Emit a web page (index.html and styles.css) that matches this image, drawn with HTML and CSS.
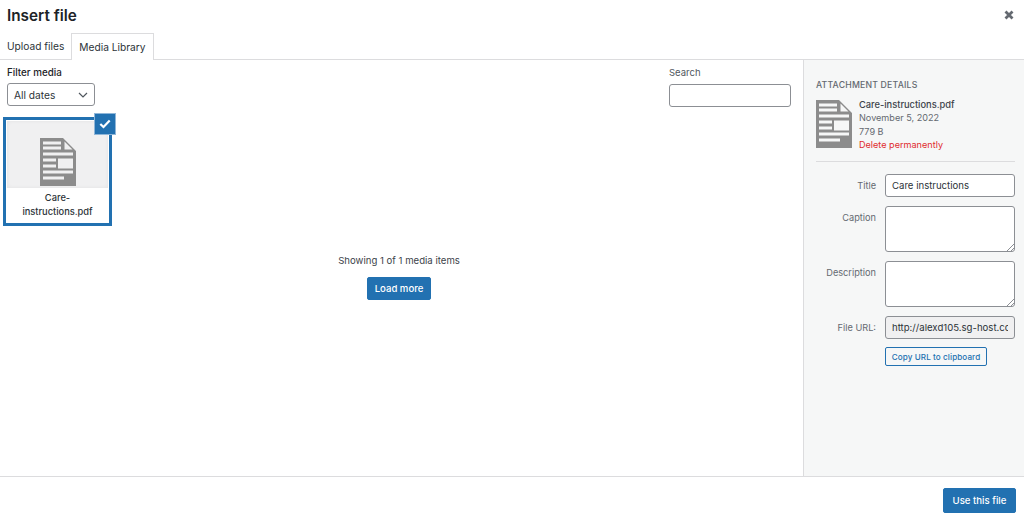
FILE: index.html
```html
<!DOCTYPE html>
<html lang="en">
<head>
<meta charset="utf-8">
<title>Insert file</title>
<link rel="stylesheet" href="styles.css">
</head>
<body>
<svg class="defs" width="0" height="0" aria-hidden="true">
  <symbol id="doc" viewBox="0 0 36 48">
    <path fill="#8c8c8c" fill-rule="evenodd" d="M0 0H23L36 13V48H0Z M3 3.500V6.500H21V3.500Z M3 8.500V11.500H21V8.500Z M24.500 3.500V11.500H32.500Z M3 14.500V17.500H33V14.500Z M3 20.500V23.500H16V20.500Z M18 20.500V30.500H33V20.500Z M3 26.500V29.500H16V26.500Z M3 32.500V35.500H33V32.500Z M3 38.500V41.500H24V38.500Z"/>
  </symbol>
</svg>
<div class="modal">
  <header class="head">
    <h1 class="title">Insert file</h1>
    <button class="close" aria-label="Close">
      <svg width="10" height="10" viewBox="0 0 10 10"><path d="M1.500 1.500L8.500 8.500M8.500 1.500L1.500 8.500" stroke="#646970" stroke-width="2.800"/></svg>
    </button>
    <nav class="tabs">
      <a class="tab">Upload files</a>
      <a class="tab active">Media Library</a>
    </nav>
  </header>
  <div class="main">
    <section class="browser">
      <div class="toolbar">
        <div class="filter">
          <label class="filter-label">Filter media</label>
          <div class="select">All dates
            <svg width="10" height="6" viewBox="0 0 10 6"><path d="M1 1L5 5L9 1" fill="none" stroke="#50575e" stroke-width="1.200"/></svg>
          </div>
        </div>
        <div class="search">
          <label class="search-label">Search</label>
          <div class="search-input"></div>
        </div>
      </div>
      <div class="grid">
        <div class="thumb">
          <div class="preview"><svg class="thumb-icon"><use href="#doc"/></svg></div>
          <div class="filename">Care-<br>instructions.pdf</div>
          <span class="check">
            <svg width="12" height="10" viewBox="0 0 12 10"><path d="M1.300 5L4.500 8L10.700 1.500" fill="none" stroke="#fff" stroke-width="2.200"/></svg>
          </span>
        </div>
      </div>
      <div class="loader">
        <p class="count">Showing 1 of 1 media items</p>
        <button class="btn more">Load more</button>
      </div>
    </section>
    <aside class="side">
      <h2 class="side-title">ATTACHMENT DETAILS</h2>
      <div class="info">
        <svg class="info-icon"><use href="#doc"/></svg>
        <div class="meta">
          <div class="meta-name">Care-instructions.pdf</div>
          <div>November 5, 2022</div>
          <div>779 B</div>
          <div class="delete">Delete permanently</div>
        </div>
      </div>
      <div class="fields">
        <div class="row"><label class="lab">Title</label><div class="input">Care instructions</div></div>
        <div class="row"><label class="lab">Caption</label><div class="area"><svg class="grip" width="8" height="8" viewBox="0 0 8 8"><path d="M1 8L8 1M5 8L8 5" stroke="#8c8f94"/></svg></div></div>
        <div class="row"><label class="lab">Description</label><div class="area"><svg class="grip" width="8" height="8" viewBox="0 0 8 8"><path d="M1 8L8 1M5 8L8 5" stroke="#8c8f94"/></svg></div></div>
        <div class="row"><label class="lab">File URL:</label><div class="input url"><span class="url-text">http://alexd105.sg-host.com/wp-content/uploads</span></div></div>
        <div class="row copy-row"><button class="copy">Copy URL to clipboard</button></div>
      </div>
    </aside>
  </div>
  <footer class="foot"><button class="btn use">Use this file</button></footer>
</div>
</body>
</html>
```
FILE: styles.css
```css
* { box-sizing: border-box; }
html, body { margin: 0; height: 100%; }
body { font-family: Inter, "Liberation Sans", sans-serif; font-size: 10px; color: #3c434a; background: #fff; overflow: hidden; }
.defs { position: absolute; }
.modal { display: flex; flex-direction: column; width: 1024px; height: 520px; }
.head { position: relative; height: 60px; border-bottom: 1px solid #dcdcde; padding-left: 7px; }
.title { margin: 0; height: 33px; font-size: 15.300px; font-weight: 600; line-height: 31px; color: #1d2327; }
.close { position: absolute; top: 10px; right: 10px; width: 10px; height: 10px; padding: 0; border: 0; background: none; display: flex; }
.tabs { display: flex; }
.tab { height: 27px; padding: 0 7px 0 0; font-size: 10.200px; line-height: 26px; color: #2c3338; }
.tab.active { background: #fff; border: 1px solid #dcdcde; border-bottom: 0; padding: 0 7px; line-height: 26px; }
.main { flex: 1; display: flex; min-height: 0; }
.browser { position: relative; flex: 1; padding: 7px 12px 0 7px; }
.toolbar { display: flex; justify-content: space-between; height: 50px; }
.filter-label { display: block; font-size: 9.800px; font-weight: 500; line-height: 12px; color: #1d2327; margin-bottom: 4px; }
.select { display: flex; justify-content: space-between; align-items: center; width: 88px; height: 23px; padding: 0 6px 0 6px; border: 1px solid #8c8f94; border-radius: 3px; font-size: 10.200px; color: #2c3338; background: #fff; }
.search { width: 122px; }
.search-label { display: block; font-size: 9.500px; line-height: 12px; color: #50575e; margin-bottom: 5px; }
.search-input { height: 23px; border: 1px solid #8c8f94; border-radius: 3px; background: #fff; }
.grid { margin-left: -4px; }
.thumb { position: relative; width: 109px; height: 109px; border: 3px solid #2271b1; padding: 1px; background: #fff; }
.preview { height: 67px; background: #f0f0f1; display: flex; justify-content: center; padding-top: 17px; box-shadow: inset 0 0 4px rgba(0,0,0,.06); }
.thumb-icon { width: 36px; height: 48px; }
.filename { height: 34px; padding-top: 3px; text-align: center; font-size: 9.300px; font-weight: 500; line-height: 13.500px; color: #2c3338; background: #fff; }
.check { position: absolute; top: -7px; right: -7px; width: 22px; height: 22px; display: flex; align-items: center; justify-content: center; background: #2271b1; border: 1.500px solid #8fb6d8; }
.loader { position: absolute; top: 194px; left: 0; right: 5px; text-align: center; }
.count { margin: 0 0 10px; font-size: 9.600px; line-height: 13px; color: #3c434a; }
.btn { height: 23px; padding: 0; border: 1px solid #2271b1; border-radius: 2px; background: #2271b1; color: #fff; font: 500 9.600px Inter, "Liberation Sans", sans-serif; }
.more { width: 64px; }
.side { width: 221px; border-left: 1px solid #dcdcde; background: #f6f7f7; padding: 19px 9px 0 12px; }
.side-title { margin: 0 0 7px; font-size: 8.700px; font-weight: 500; line-height: 12px; color: #646970; letter-spacing: .2px; }
.info { display: flex; gap: 7px; padding-bottom: 10px; border-bottom: 1px solid #dcdcde; }
.info-icon { width: 36px; height: 48px; flex: none; margin-top: 2px; }
.meta { font-size: 9.100px; line-height: 13.300px; color: #646970; }
.meta-name { font-weight: 500; font-size: 9.300px; color: #3c434a; }
.delete { color: #e02b2e; }
.fields { display: flex; flex-direction: column; padding-top: 12px; gap: 9px; }
.row { display: flex; gap: 9px; }
.lab { width: 60px; padding-top: 6px; text-align: right; font-size: 9.200px; line-height: 12px; color: #646970; }
.input { flex: 1; height: 23px; padding: 0 6px; border: 1px solid #8c8f94; border-radius: 3px; background: #fff; font-size: 9.600px; line-height: 21px; color: #2c3338; overflow: hidden; white-space: nowrap; }
.area { position: relative; flex: 1; height: 46px; border: 1px solid #8c8f94; border-radius: 3px; background: #fff; }
.grip { position: absolute; right: 0; bottom: 0; }
.url { background: #f0f0f1; }
.url-text { display: block; overflow: hidden; }
.copy-row { padding-left: 69px; margin-top: -1px; }
.copy { height: 19px; width: 102px; padding: 0; border: 1px solid #2271b1; border-radius: 2px; background: #f6f7f7; color: #2271b1; font: 500 8.100px Inter, "Liberation Sans", sans-serif; letter-spacing: .1px; }
.foot { height: 44px; border-top: 1px solid #dcdcde; display: flex; justify-content: flex-end; align-items: flex-start; padding: 11px 8px 0 0; background: #fff; }
.use { height: 25px; width: 73px; }
```
